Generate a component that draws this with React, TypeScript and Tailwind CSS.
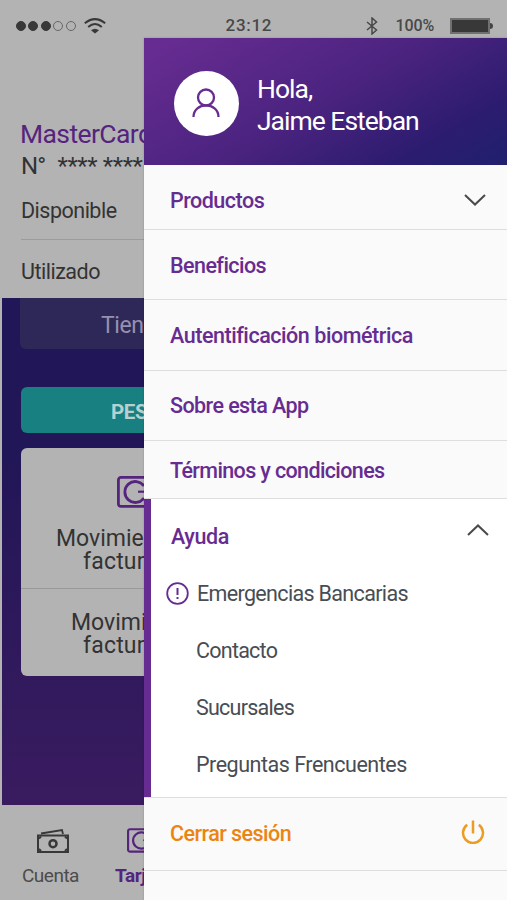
import { useState } from 'react';

interface MenuEntry {
  label: string;
  className: string;
  expandable?: boolean;
}

const menuEntries: MenuEntry[] = [
  { label: 'Productos', className: 'h-[65px] pt-[8px] tracking-[-0.5px]', expandable: true },
  { label: 'Beneficios', className: 'h-[70px] pt-[3px] tracking-[-0.55px]' },
  { label: 'Autentificación biométrica', className: 'h-[71px] pt-[2px] tracking-[-0.45px]' },
  { label: 'Sobre esta App', className: 'h-[70px] pt-[1px] tracking-[-0.57px]' },
  { label: 'Términos y condiciones', className: 'h-[58px] pt-[4px] tracking-[-0.63px]' },
];

const helpEntries = [
  { label: 'Emergencias Bancarias', className: 'pl-px tracking-[-0.66px]', alert: true },
  { label: 'Contacto', className: 'tracking-[-0.75px]' },
  { label: 'Sucursales', className: 'tracking-[-0.75px]' },
  { label: 'Preguntas Frencuentes', className: 'tracking-[-0.48px]' },
];

function CardIcon({ className }: { className: string }) {
  return (
    <svg className={className} viewBox="0 0 44 32" fill="none" stroke="currentColor" strokeWidth={2.8}>
      <rect x="1.4" y="1.4" width="41" height="29" rx="2.5" />
      <path d="M27 10A10.500 10.500 0 1 0 27 22" />
      <path d="M21 15.700h8" strokeWidth={2.200} />
      <path d="M27 6v6h4V6zM27 20v6h4v-6z" fill="currentColor" stroke="none" />
    </svg>
  );
}

function Chevron({ className }: { className: string }) {
  return (
    <svg className={className} viewBox="0 0 22 12" fill="none" stroke="#4a4a4a" strokeWidth={2}>
      <path d="m1 1 10 9.500L21 1" />
    </svg>
  );
}

function StatusBar() {
  return (
    <header className="flex h-[38px] shrink-0 items-center pt-[13px] text-[17px] font-medium text-[#484848]">
      <div className="ml-4 flex gap-[2.4px]">
        {[true, true, true, false, false].map((filled, i) => (
          <span
            key={i}
            className={`size-[10px] rounded-full border ${filled ? 'border-[#383838] bg-[#383838]' : 'border-[#666]'}`}
          />
        ))}
      </div>
      <svg className="ml-[8px] h-4 w-[22px]" viewBox="0 0 22 16" fill="none" stroke="#383838" strokeWidth={2}>
        <path d="M.8 5.2Q11-3 21.2 5.2M4.2 9Q11 3 17.8 9" />
        <path d="M7 12.2q4-3 8 0L11 15.6z" fill="#383838" stroke="none" />
      </svg>
      <span className="ml-[120px] w-[48px] whitespace-nowrap tracking-[0.7px]">23:12</span>
      <svg className="ml-[92px] h-[18px] w-3" viewBox="0 0 12 18" fill="none" stroke="#484848" strokeWidth={1.5}>
        <path d="m1 5 9.500 8L6 17V1l4.500 4L1 13" />
      </svg>
      <span className="ml-[18px] w-[41px] text-[16px] tracking-[-0.1px]">100%</span>
      <span className="ml-[13px] h-[16px] w-[40px] border-2 border-[#707070]">
        <span className="block h-full bg-[#383838]" />
      </span>
      <span className="h-[6px] w-[3px] rounded-r bg-[#444]" />
    </header>
  );
}

function AccountScreen() {
  return (
    <div className="flex min-h-0 w-[144px] flex-1 flex-col overflow-hidden">
      <section className="flex h-[260px] shrink-0 flex-col pl-[21px] pt-[79px]">
        <h1 className="-ml-px text-[26.500px] leading-[34px] tracking-[-0.6px] text-[#55247e]">MasterCard</h1>
        <p className="mt-px flex gap-[12px] text-[24px] leading-[28px]">
          <span className="tracking-[-0.8px]">N°</span>
          <span className="tracking-[-0.4px]">**** ****</span>
        </p>
        <p className="mt-[17px] text-[21.500px] leading-[28px] tracking-[-0.5px]">Disponible</p>
        <hr className="mt-[14px] border-[#9b9b9b]" />
        <p className="mt-[18px] text-[21.500px] leading-[28px] tracking-[-0.5px]">Utilizado</p>
      </section>
      <section className="ml-[2px] h-[507px] shrink-0 bg-linear-to-b from-[#211657] from-30% to-[#3a1b60] pl-[19px]">
        <div className="-ml-px h-[51px] rounded-bl-md bg-[#2e2859] pl-[81px] pt-[13px] text-[23px] leading-[30px] tracking-[-0.4px] text-[#9691ac]">
          Tienes
        </div>
        <div className="mt-[38px] h-[46px] rounded-l-md bg-[#188080] pl-[90px] pt-[11px] text-[20.500px] font-bold leading-[28px] tracking-[-0.4px] text-[#b8d0d0]">
          PESOS
        </div>
        <div className="mt-[15px] h-[228px] rounded-l-md bg-[#b3b3b3]">
          <div className="h-[141px] border-b border-[#999] pt-[28px]">
            <CardIcon className="ml-[96px] h-[32px] w-[44px] text-[#55247e]" />
            <p className="pl-[35px] pt-[19px] text-[23px] leading-[23px]">
              Movimientos
              <span className="block pl-[27px] tracking-[0.2px]">facturados</span>
            </p>
          </div>
          <p className="pl-[50px] pt-[22px] text-[23px] leading-[23px]">
            Movimientos
            <span className="block pl-[12px] tracking-[0.2px]">facturados</span>
          </p>
        </div>
      </section>
      <nav className="flex flex-1 pl-[22px] pt-[23px] text-[19px] leading-[26px]">
        <div className="w-[93px] shrink-0 tracking-[-0.5px] text-[#4c4c4c]">
          <svg className="ml-[15px] h-[25px] w-[32px]" viewBox="0 0 32 25" fill="none" stroke="#383838" strokeWidth={2}>
            <path d="M1 7.500h30V24H1z" />
            <path d="m4 5.500 21-3.500 1 4" strokeWidth={1.800} />
            <circle cx="16" cy="15.700" r="3.500" strokeWidth={2.500} />
            <path d="M2 10.500 4 8.500M30 10.500 28 8.500M2 21l2 2M30 21l-2 2" />
          </svg>
          <span className="mt-[10px] block">Cuenta</span>
        </div>
        <div className="font-bold tracking-[-0.4px] text-[#55247e]">
          <CardIcon className="ml-[12px] h-[25px] w-[34px]" />
          <span className="mt-[10px] block">Tarjetas</span>
        </div>
      </nav>
    </div>
  );
}

function Drawer() {
  const [helpOpen, setHelpOpen] = useState(true);

  return (
    <aside className="absolute bottom-0 right-0 top-[38px] flex w-[363px] flex-col bg-[#fafafa] text-[21.500px] shadow-[0_0_2px_rgba(0,0,0,0.2)]">
      <div className="flex h-[127px] shrink-0 items-center bg-linear-[150deg,#672c91_5%,#4a237f_50%,#2c1c70_80%,#20206e] pl-[30px] pt-[3px] text-white">
        <div className="grid size-[65px] place-items-center rounded-full bg-white">
          <svg className="mr-px h-[30px] w-[28px]" viewBox="0 0 28 30" fill="none" stroke="#672c91" strokeWidth={2.3}>
            <circle cx="14" cy="9.500" r="8" />
            <path d="M1.500 29C1.500 13.500 26.500 13.500 26.500 29" />
          </svg>
        </div>
        <p className="ml-[18px] pt-[3px] text-[26.500px] leading-[32px] tracking-[-1px]">
          Hola,
          <br />
          Jaime Esteban
        </p>
      </div>

      {menuEntries.map((entry) => (
        <button
          key={entry.label}
          className={`flex shrink-0 items-center justify-between border-b border-[#dedede] pl-[26px] pr-[21px] font-medium text-[#672c91] ${entry.className}`}
        >
          <span>{entry.label}</span>
          {entry.expandable && <Chevron className="mb-[3px] h-[12px] w-[22px]" />}
        </button>
      ))}

      <div className="h-[298px] shrink-0 border-l-[7px] border-[#672c91] bg-white">
        <button
          onClick={() => setHelpOpen(!helpOpen)}
          className="flex h-[66px] w-full items-center justify-between pl-[20px] pr-[18px] pt-[11px] font-medium tracking-[-0.4px] text-[#672c91]"
        >
          <span>Ayuda</span>
          <Chevron className="mb-[16px] h-[12px] w-[22px] rotate-180" />
        </button>
        {helpOpen &&
          helpEntries.map((entry) => (
            <div key={entry.label} className="flex h-[57px] items-center pl-[15px] text-[#484d54]">
              <span className="w-[30px]">
                {entry.alert && (
                  <svg className="size-[23px]" viewBox="0 0 23 23" fill="none" stroke="#672c91" strokeWidth={2}>
                    <circle cx="11.500" cy="11.500" r="10.300" strokeWidth={1.800} />
                    <path d="M11.500 6v7M11.500 15v2" />
                  </svg>
                )}
              </span>
              <span className={`pt-[2px] ${entry.className}`}>{entry.label}</span>
            </div>
          ))}
      </div>

      <button className="flex h-[74px] shrink-0 items-center justify-between border-y border-[#dedede] pl-[26px] pr-[22px] font-medium tracking-[-0.55px] text-[#ec8411]">
        Cerrar sesión
        <svg className="mb-[4px] size-6" viewBox="0 0 24 24" fill="none" stroke="#eb9c22" strokeWidth={2.500}>
          <path d="M12 .5v13M6.200 4.800a10 10 0 1 0 11.600 0" />
        </svg>
      </button>
    </aside>
  );
}

export default function App() {
  return (
    <main className="relative flex h-[900px] w-[507px] flex-col overflow-hidden whitespace-nowrap bg-[#b3b3b3] font-[Roboto,sans-serif] text-[#333]">
      <StatusBar />
      <AccountScreen />
      <Drawer />
    </main>
  );
}
